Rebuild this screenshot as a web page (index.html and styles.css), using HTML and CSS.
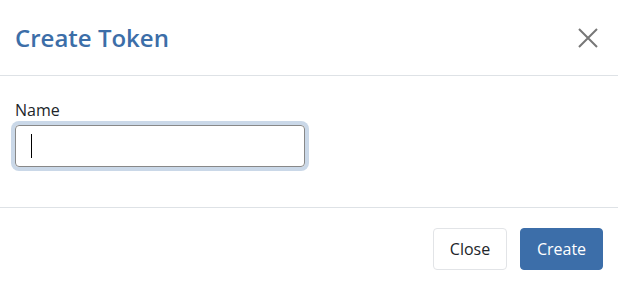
FILE: index.html
```html
<!DOCTYPE html>
<html lang="en">
<head>
<meta charset="utf-8">
<title>Create Token</title>
<link rel="stylesheet" href="styles.css">
</head>
<body>
<div class="modal">
  <div class="modal-header">
    <h1 class="modal-title">Create Token</h1>
    <button class="close" aria-label="Close">
      <svg width="20" height="20" viewBox="0 0 20 20"><path d="M1 1 L19 19 M19 1 L1 19" stroke="#777" stroke-width="2" fill="none"/></svg>
    </button>
  </div>
  <div class="modal-body">
    <label class="label">Name</label>
    <div class="input" role="textbox"><span class="caret"></span></div>
  </div>
  <div class="modal-footer">
    <button class="btn btn-light">Close</button>
    <button class="btn btn-primary">Create</button>
  </div>
</div>
</body>
</html>
```
FILE: styles.css
```css
html, body {
  margin: 0;
  padding: 0;
  background: #fff;
}
body {
  font-family: "Open Sans", "Noto Sans", sans-serif;
  color: #212529;
  font-size: 16px;
}
.modal {
  width: 618px;
}
.modal-header {
  height: 75px;
  display: flex;
  align-items: center;
  justify-content: space-between;
  padding: 0 20px 0 15px;
  border-bottom: 1px solid #dee2e6;
}
.modal-title {
  margin: 0;
  font-size: 24px;
  font-weight: 600;
  color: #3c6ea8;
  line-height: 1.5;
}
.close {
  background: none;
  border: 0;
  padding: 0;
  width: 20px;
  height: 20px;
  display: flex;
}
.modal-body {
  padding: 22px 15px 40px;
}
.label {
  display: block;
  line-height: 24px;
  margin-bottom: 3px;
}
.input {
  width: 290px;
  height: 42px;
  box-sizing: border-box;
  border: 1px solid #888;
  border-radius: 4px;
  box-shadow: 0 0 0 4px #cad8e8;
  display: flex;
  align-items: center;
  padding-left: 15px;
}
.caret {
  width: 1px;
  height: 24px;
  background: #000;
}
.modal-footer {
  border-top: 1px solid #dee2e6;
  display: flex;
  justify-content: flex-end;
  gap: 13px;
  padding: 20px 15px 14px;
}
.btn {
  font-family: inherit;
  font-size: 16px;
  height: 42px;
  border-radius: 4px;
  padding: 0 15px;
  cursor: pointer;
}
.btn-light {
  background: #fff;
  border: 1px solid #e2e4e7;
  color: #212529;
  width: 74px;
}
.btn-primary {
  background: #3c6ea9;
  border: 1px solid #3c6ea9;
  color: #fff;
  width: 83px;
}
```
